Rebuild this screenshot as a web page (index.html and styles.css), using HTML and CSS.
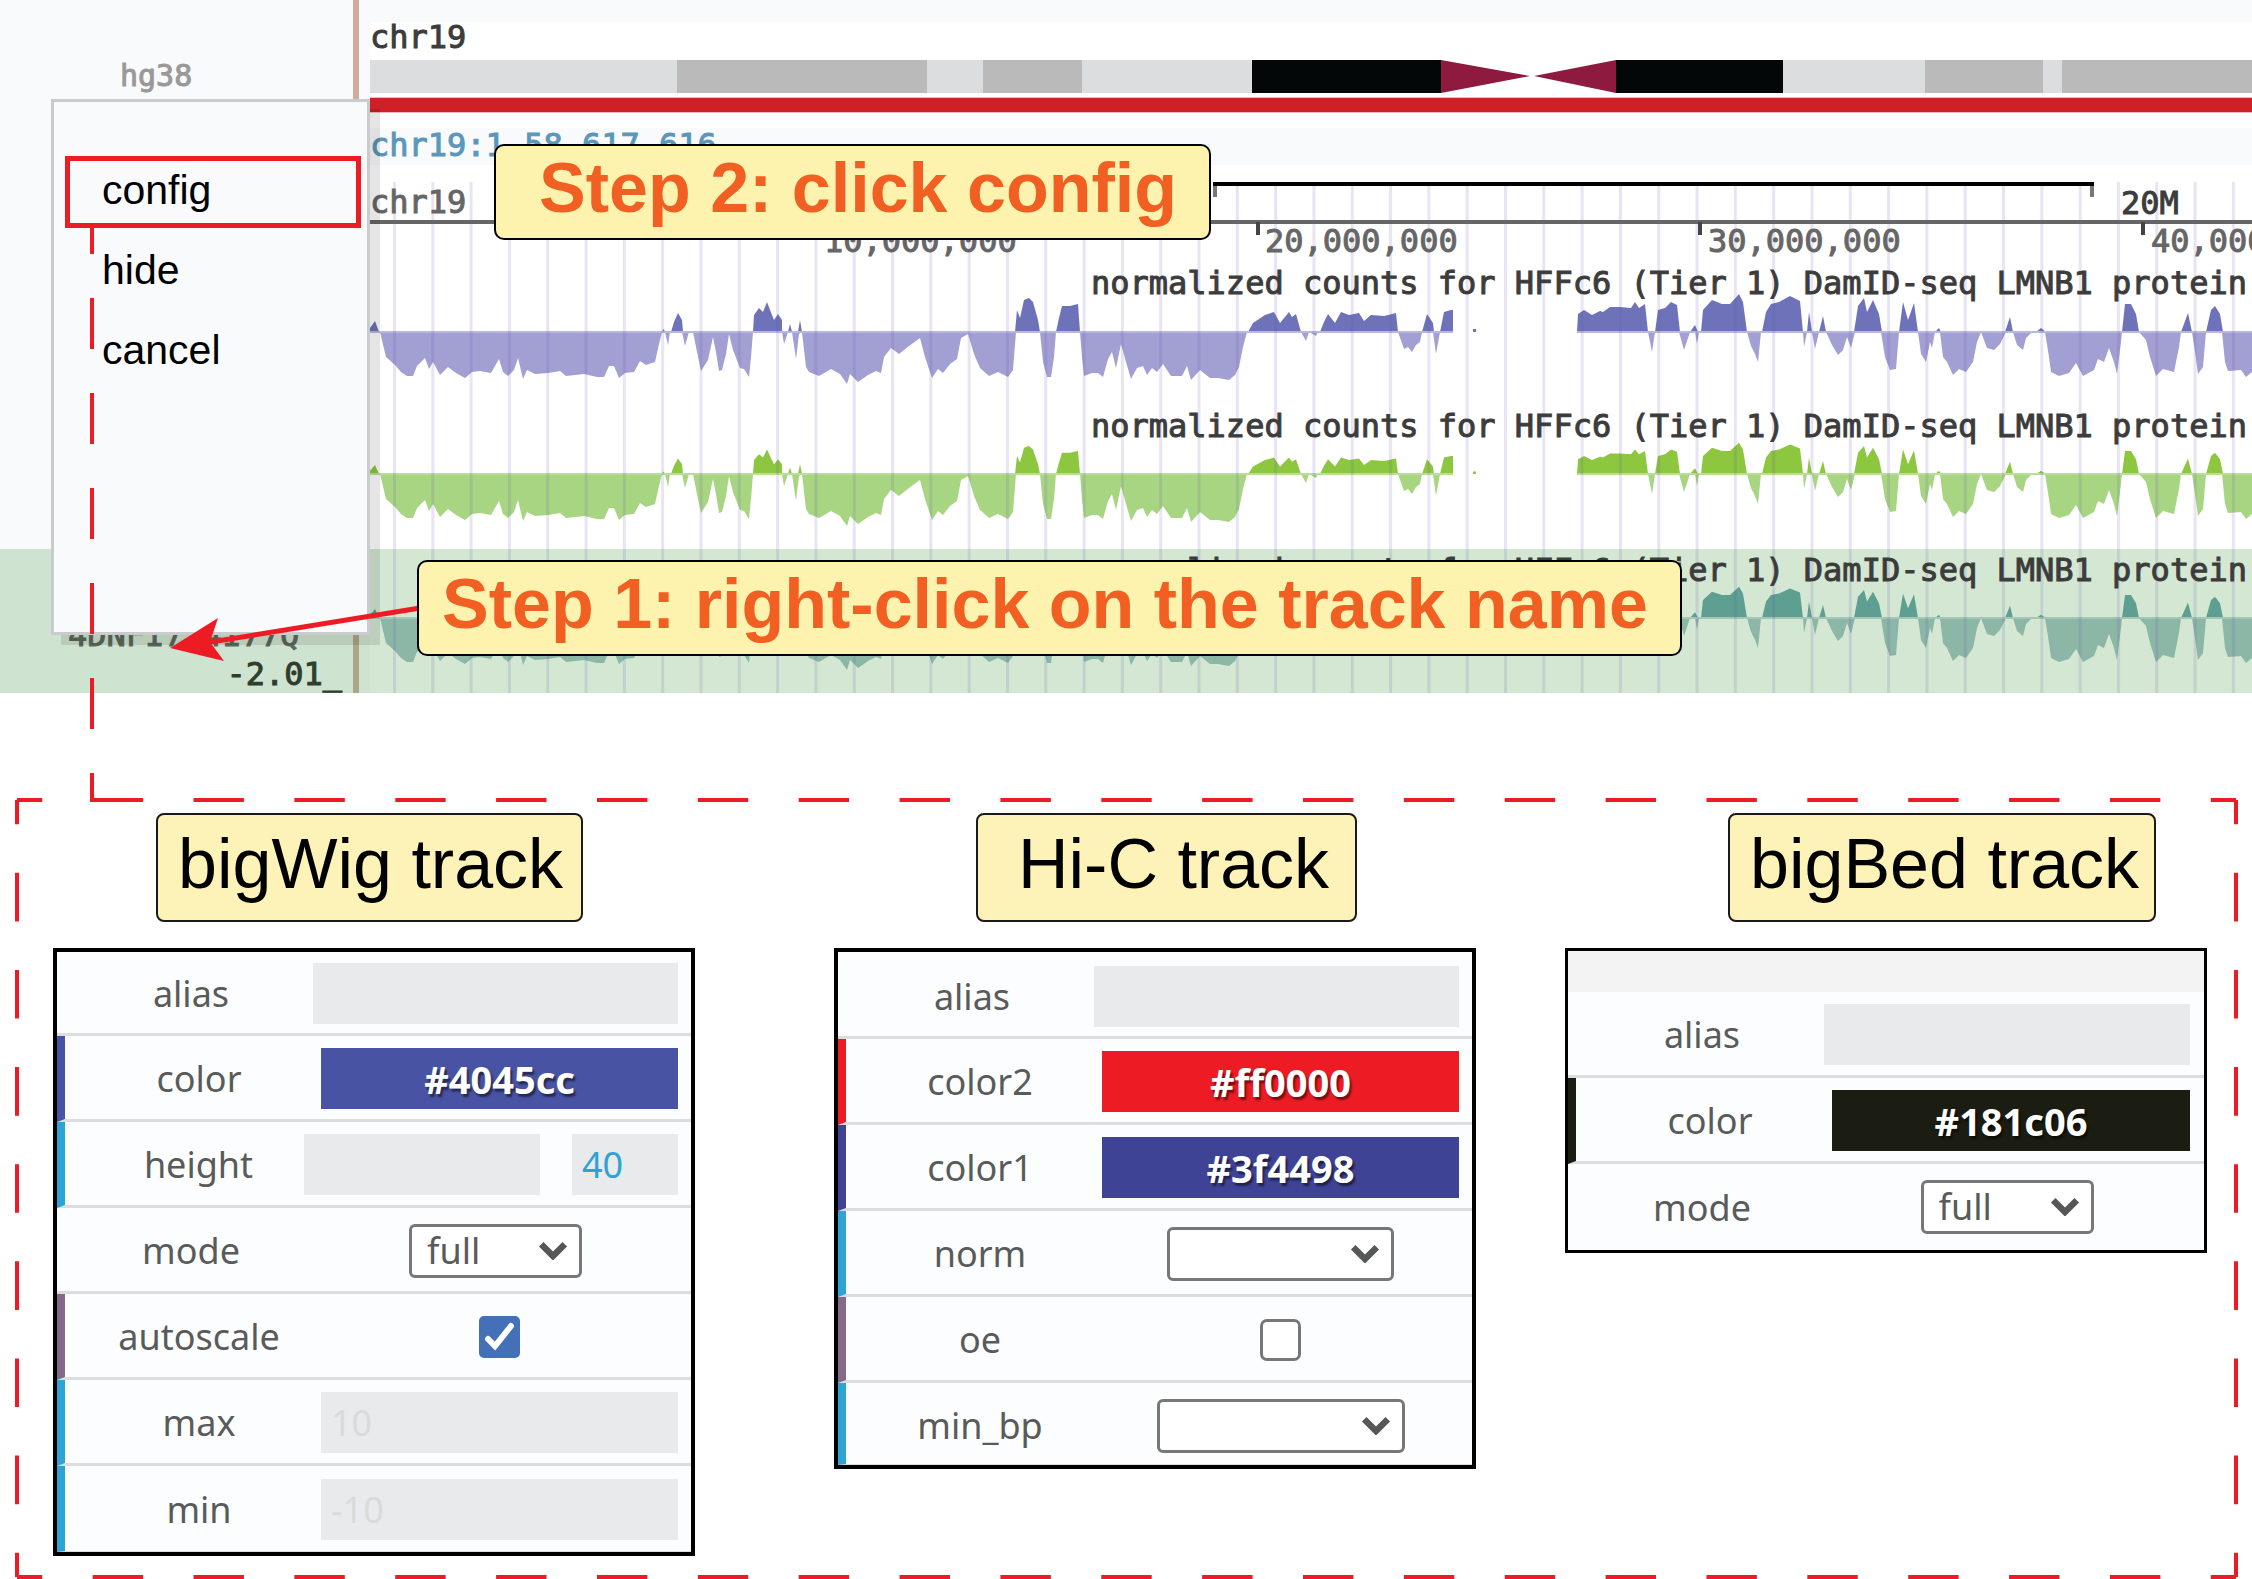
FILE: index.html
```html
<!DOCTYPE html>
<html lang="en">
<head>
<meta charset="utf-8">
<title>Track configuration</title>
<link rel="stylesheet" href="styles.css">
</head>
<body>
<main class="figure">
  <section class="browser">
    <div class="names">
      <span class="genome">hg38</span>
      <div class="selected-name">
        <span class="track-id">4DNFI7Z4I77Q</span>
        <span class="track-min">-2.01_</span>
      </div>
    </div>
    <svg class="tracks" viewBox="370 0 1882 693" role="img" aria-label="chr19 tracks">
      <defs>
        <pattern id="grid" x="393" y="0" width="38.31" height="40" patternUnits="userSpaceOnUse">
          <rect width="3" height="40" fill="#5b52b0" fill-opacity="0.15"/>
        </pattern>
        <polygon id="up" points="370,0 370,-4 375,-11 379,0 662,0 663,-3 666,0 671,0 674,-10 678,-19 682,-12 683,0 753,0 754,-17 759,-24 763,-20 767,-30 770,-22 774,-12 778,-18 782,-12 782,0 788,0 790,-8 792,0 798,0 800,-12 802,0 1015,0 1017,-22 1020,-14 1024,-32 1029,-34 1033,-30 1038,-12 1040,0 1056,0 1059,-14 1062,-26 1070,-26 1078,-28 1080,0 1248,0 1253,-9 1265,-17 1274,-20 1280,-9 1289,-20 1292,-15 1296,-18 1301,0 1320,0 1324,-10 1328,-18 1335,-9 1341,-20 1349,-17 1359,-19 1364,-11 1371,-17 1384,-16 1396,-19 1398,0 1422,0 1427,-18 1433,-9 1434,0 1440,0 1444,-20 1451,-22 1453,-22 1453,0 1473,0 1473,-3 1476,-3 1476,0 1577,0 1578,-18 1584,-22 1592,-17 1600,-21 1603,-20 1610,-25 1620,-25 1631,-24 1635,-30 1639,-24 1645,-28 1648,0 1655,0 1658,-22 1665,-24 1671,-30 1677,-27 1680,0 1690,0 1695,-7 1698,0 1701,0 1703,-22 1712,-32 1722,-28 1730,-28 1739,-38 1743,-30 1747,0 1762,0 1766,-20 1771,-28 1779,-30 1790,-36 1800,-31 1803,0 1807,0 1809,-20 1812,0 1819,0 1823,-16 1826,0 1854,0 1858,-26 1864,-34 1867,-20 1873,-32 1879,-18 1882,0 1899,0 1903,-30 1908,-12 1914,-29 1918,0 1935,0 1939,-4 1941,0 2005,0 2010,-15 2013,0 2036,0 2041,-4 2046,0 2122,0 2125,-28 2131,-28 2136,-18 2139,0 2181,0 2188,-19 2192,0 2206,0 2211,-22 2215,-26 2220,-18 2223,0"/>
        <polygon id="down" points="380,0 386,25 395,33 401,40 407,44 413,44 417,34 425,26 429,37 433,30 440,43 448,35 456,41 465,46 472,40 480,39 491,41 499,27 503,40 508,44 514,38 518,26 523,47 527,38 535,42 548,41 560,39 566,44 584,42 597,45 604,45 609,34 614,34 619,46 625,41 634,40 640,29 646,33 655,30 659,12 662,0 665,0 668,13 670,0 682,0 685,14 689,0 693,0 697,20 701,39 708,28 713,5 716,20 719,39 722,38 726,22 729,2 733,18 740,36 744,37 749,45 751,25 753,0 782,0 784,12 788,0 792,0 796,27 799,2 802,0 806,35 809,40 819,44 831,37 840,42 847,52 850,42 858,50 868,43 876,39 881,41 884,25 891,16 899,22 909,14 920,6 925,25 932,46 938,37 943,41 950,32 957,27 961,6 968,2 974,22 980,36 989,44 998,40 1008,45 1013,38 1016,0 1040,0 1043,30 1047,45 1051,45 1054,25 1056,0 1080,0 1082,25 1084,44 1092,41 1098,41 1103,45 1108,27 1112,20 1116,36 1121,12 1126,30 1131,47 1137,36 1143,34 1147,43 1152,36 1157,40 1163,32 1171,44 1182,44 1187,34 1191,48 1200,38 1210,46 1218,46 1229,48 1235,43 1239,35 1243,15 1247,0 1301,0 1306,9 1309,0 1316,4 1318,0 1398,0 1404,17 1408,15 1412,20 1416,13 1420,10 1422,0 1433,0 1436,22 1440,0 1648,0 1652,20 1655,0 1679,0 1684,18 1690,0 1695,0 1697,12 1699,0 1747,0 1751,14 1755,22 1758,30 1761,0 1803,0 1804,15 1807,0 1812,0 1815,17 1819,0 1826,0 1832,13 1838,23 1843,18 1847,5 1851,16 1855,0 1881,0 1885,25 1890,38 1896,37 1899,0 1918,0 1921,22 1926,30 1930,10 1932,16 1935,0 1940,0 1943,25 1947,30 1953,43 1959,37 1966,40 1973,30 1977,10 1981,0 1987,16 1994,18 2000,12 2006,0 2013,0 2017,13 2023,18 2026,6 2032,0 2045,0 2049,25 2051,40 2059,44 2069,41 2076,31 2083,44 2094,38 2098,27 2104,30 2109,16 2114,30 2117,42 2121,10 2122,0 2139,0 2146,8 2150,25 2156,44 2163,37 2174,40 2179,15 2181,0 2192,0 2195,20 2198,42 2203,35 2206,0 2222,0 2225,30 2228,39 2241,38 2246,45 2252,40 2252,0"/>
        <path id="zero" d="M370 0H1453M1577 0H2252"/>
      </defs>

      <rect class="band" x="370" y="0" width="1882" height="22"/>
      <rect class="band" x="370" y="128" width="1882" height="37"/>

      <!-- ideogram -->
      <g>
        <rect x="370" y="60" width="882" height="33" fill="#dcdddf"/>
        <rect x="1783" y="60" width="469" height="33" fill="#dcdddf"/>
        <g fill="#bababa">
          <rect x="677" y="60" width="250" height="33"/>
          <rect x="983" y="60" width="99" height="33"/>
          <rect x="1925" y="60" width="118" height="33"/>
          <rect x="2062" y="60" width="190" height="33"/>
        </g>
        <rect x="1252" y="60" width="189" height="33" fill="#030707"/>
        <rect x="1616" y="60" width="167" height="33" fill="#030707"/>
        <path d="M1441 60L1530 76L1441 93ZM1616 60L1534 76L1616 93Z" fill="#8e1a40"/>
        <rect x="370" y="97" width="1882" height="16" fill="#f3b9bb"/>
        <rect x="370" y="98" width="1882" height="14" fill="#cd2027"/>
      </g>

      <!-- highlighted track -->
      <rect x="370" y="549" width="1882" height="144" fill="#d3e7d2"/>

      <!-- signal tracks -->
      <g transform="translate(0 332)">
        <use href="#down" fill="#a29fd2"/><use href="#up" fill="#6e72b8"/>
        <use href="#zero" stroke="#b9b7dd" stroke-width="2"/>
      </g>
      <g transform="translate(0 474)">
        <use href="#down" fill="#a8d582"/><use href="#up" fill="#8dc63f" transform="scale(1 0.82)"/>
        <use href="#zero" stroke="#b9dd9a" stroke-width="2"/>
      </g>
      <g transform="translate(0 618)">
        <use href="#down" fill="#8cb6a6"/><use href="#up" fill="#5e9f92" transform="scale(1 0.82)"/>
        <use href="#zero" stroke="#a3c6b7" stroke-width="2"/>
      </g>
      <rect x="380" y="182" width="1872" height="511" fill="url(#grid)"/>

      <!-- ruler -->
      <path d="M370 222H2252" stroke="#666" stroke-width="4"/>
      <path d="M1215 184V197M2092 184V197" stroke="#777" stroke-width="4"/>
      <path d="M1213 184H2094" stroke="#000" stroke-width="4"/>
      <path d="M1258 222V235M1700 222V235M2143 222V235" stroke="#444" stroke-width="4"/>

      <g class="mono">
        <g class="ink-dark">
          <text x="370" y="48">chr19</text>
          <text x="2121" y="214">20M</text>
          <text x="1091" y="294">normalized counts for HFFc6 (Tier 1) DamID-seq LMNB1 protein</text>
          <text x="1091" y="437">normalized counts for HFFc6 (Tier 1) DamID-seq LMNB1 protein</text>
          <text x="1091" y="581">normalized counts for HFFc6 (Tier 1) DamID-seq LMNB1 protein</text>
        </g>
        <g class="ink-blue">
          <text x="370" y="156">chr19:1-58,617,616</text>
        </g>
        <g class="ink-grey">
          <text x="370" y="213">chr19</text>
          <text x="824" y="252">10,000,000</text>
          <text x="1265" y="252">20,000,000</text>
          <text x="1708" y="252">30,000,000</text>
          <text x="2151" y="252">40,000,000</text>
        </g>
      </g>
    </svg>
  </section>

  <nav class="menu" aria-label="Track menu">
    <button class="menu-item menu-item--active" type="button">config</button>
    <button class="menu-item" type="button">hide</button>
    <button class="menu-item" type="button">cancel</button>
  </nav>

  <svg class="links" width="430" height="802" aria-hidden="true">
    <path d="M92 228V802" stroke="#ed1c24" stroke-width="4" stroke-dasharray="51 44" stroke-dashoffset="25"/>
    <path d="M420 608L205 643" stroke="#ed1c24" stroke-width="5"/>
    <path d="M170 648L218 618L210 642L224 661Z" fill="#ed1c24"/>
  </svg>
  <p class="callout callout--step2">Step 2: click config</p>
  <p class="callout callout--step1">Step 1: right-click on the track name</p>

  <section class="configs">
    <svg class="frame" aria-hidden="true">
      <g stroke="#ed1c24" stroke-width="4" stroke-dasharray="1 1" stroke-dashoffset="0.5">
        <line x1="0" y1="0" x2="100%" y2="0" pathLength="44"/>
        <line x1="0" y1="100%" x2="100%" y2="100%" pathLength="44"/>
        <line x1="0" y1="0" x2="0" y2="100%" pathLength="16"/>
        <line x1="100%" y1="0" x2="100%" y2="100%" pathLength="16"/>
      </g>
    </svg>

    <article class="config config--bigwig">
      <h2 class="title">bigWig track</h2>
      <form class="panel">
        <div class="row row--plain">
          <label for="w-alias">alias</label>
          <div class="value"><input class="field" id="w-alias" type="text"></div>
        </div>
        <div class="row row--indigo">
          <label for="w-color">color</label>
          <div class="value"><input class="field swatch swatch--indigo" id="w-color" type="text" value="#4045cc"></div>
        </div>
        <div class="row row--blue row--slider">
          <label for="w-height">height</label>
          <div class="value">
            <input class="field slider" id="w-height" type="range" min="10" max="100" value="40">
            <input class="field amount" type="text" value="40" aria-label="height in pixels">
          </div>
        </div>
        <div class="row row--plain">
          <label for="w-mode">mode</label>
          <div class="value"><span class="picker"><select id="w-mode"><option>full</option></select><svg viewBox="0 0 28 19"><path d="M3 4L14 15L25 4"/></svg></span></div>
        </div>
        <div class="row row--plum">
          <label for="w-auto">autoscale</label>
          <div class="value"><span class="tick"><input id="w-auto" type="checkbox" checked><svg viewBox="0 0 41 41"><path d="M9 23L16 30L32 10"/></svg></span></div>
        </div>
        <div class="row row--blue">
          <label for="w-max">max</label>
          <div class="value"><input class="field" id="w-max" type="text" placeholder="10"></div>
        </div>
        <div class="row row--blue">
          <label for="w-min">min</label>
          <div class="value"><input class="field" id="w-min" type="text" placeholder="-10"></div>
        </div>
      </form>
    </article>

    <article class="config config--hic">
      <h2 class="title">Hi-C track</h2>
      <form class="panel">
        <div class="row row--plain">
          <label for="h-alias">alias</label>
          <div class="value"><input class="field" id="h-alias" type="text"></div>
        </div>
        <div class="row row--red">
          <label for="h-color2">color2</label>
          <div class="value"><input class="field swatch swatch--red" id="h-color2" type="text" value="#ff0000"></div>
        </div>
        <div class="row row--navy">
          <label for="h-color1">color1</label>
          <div class="value"><input class="field swatch swatch--navy" id="h-color1" type="text" value="#3f4498"></div>
        </div>
        <div class="row row--blue">
          <label for="h-norm">norm</label>
          <div class="value"><span class="picker picker--norm"><select id="h-norm"><option></option></select><svg viewBox="0 0 28 19"><path d="M3 4L14 15L25 4"/></svg></span></div>
        </div>
        <div class="row row--plum">
          <label for="h-oe">oe</label>
          <div class="value"><span class="tick"><input id="h-oe" type="checkbox"></span></div>
        </div>
        <div class="row row--blue">
          <label for="h-bp">min_bp</label>
          <div class="value"><span class="picker picker--bp"><select id="h-bp"><option></option></select><svg viewBox="0 0 28 19"><path d="M3 4L14 15L25 4"/></svg></span></div>
        </div>
      </form>
    </article>

    <article class="config config--bigbed">
      <h2 class="title">bigBed track</h2>
      <form class="panel">
        <div class="strip"></div>
        <div class="row row--plain">
          <label for="b-alias">alias</label>
          <div class="value"><input class="field" id="b-alias" type="text"></div>
        </div>
        <div class="row row--black">
          <label for="b-color">color</label>
          <div class="value"><input class="field swatch swatch--black" id="b-color" type="text" value="#181c06"></div>
        </div>
        <div class="row row--plain">
          <label for="b-mode">mode</label>
          <div class="value"><span class="picker"><select id="b-mode"><option>full</option></select><svg viewBox="0 0 28 19"><path d="M3 4L14 15L25 4"/></svg></span></div>
        </div>
      </form>
    </article>
  </section>
</main>
</body>
</html>
```
FILE: styles.css
```css
* {
  box-sizing: border-box;
}

body {
  margin: 0;
  background: #fff;
  color: #000;
  font-family: "Liberation Sans", Arial, sans-serif;
}

.figure {
  position: relative;
  padding-bottom: 2px;
}

/* Genome browser */

.browser {
  display: flex;
}

.names {
  display: flex;
  flex: none;
  flex-direction: column;
  justify-content: space-between;
  width: 370px;
  background: linear-gradient(#d0aca0, #d0aca0) 353px 0 / 6px 100% no-repeat #f9fafc;
  font-family: "DejaVu Sans Mono", monospace;
  font-size: 32px;
  line-height: 40px;
  -webkit-text-stroke: 1px;
}

.genome {
  padding: 56px 0 0 120px;
  color: #999;
  font-size: 30px;
}

.selected-name {
  display: flex;
  flex-direction: column;
  height: 144px;
  padding-top: 76px;
  background: rgba(34, 139, 34, 0.2);
}

.track-id {
  padding-left: 68px;
  color: #5c685c;
  line-height: 20px;
}

.track-min {
  padding: 10px 28px 0 0;
  color: #2f3d2f;
  line-height: 38px;
  text-align: right;
}

.tracks {
  display: block;
  flex: 1;
  min-width: 0;
  height: auto;
}

.band {
  fill: #f9fafc;
}

.mono {
  font-family: "DejaVu Sans Mono", monospace;
  font-size: 32px;
  stroke-width: 1px;
}

.ink-dark {
  fill: #3c3c3c;
  stroke: #3c3c3c;
}

.ink-blue {
  fill: #5a97ba;
  stroke: #5a97ba;
}

.ink-grey {
  fill: #666;
  stroke: #666;
}

/* Context menu and annotations over the browser */

.menu {
  position: absolute;
  top: 99px;
  left: 51px;
  display: flex;
  flex-direction: column;
  gap: 8px;
  width: 319px;
  height: 536px;
  padding: 54px 6px 0 11px;
  border: 3px solid #c9cccc;
  background: #f9fafc;
  box-shadow: 10px 10px 0 rgba(0, 0, 0, 0.1);
}

.menu-item {
  height: 72px;
  padding: 0 0 4px 32px;
  border: 5px solid transparent;
  background: none;
  color: #000;
  font-family: inherit;
  font-size: 41px;
  text-align: left;
}

.menu-item--active {
  border-color: #ed1c24;
}

.links {
  position: absolute;
  top: 0;
  left: 0;
  fill: none;
  pointer-events: none;
}

.callout {
  position: absolute;
  height: 96px;
  margin: 0;
  border: 2px solid #000;
  border-radius: 10px;
  background: #fef3ae;
  color: #f15f22;
  font-size: 70px;
  font-weight: bold;
  line-height: 84px;
  white-space: nowrap;
}

.callout--step2 {
  top: 144px;
  left: 494px;
  padding: 0 32px 0 43px;
}

.callout--step1 {
  top: 560px;
  left: 417px;
  padding: 0 32px 0 23px;
}

/* Track settings */

.configs {
  position: relative;
  display: flex;
  align-items: flex-start;
  margin: 107px 16px 0 17px;
  padding: 13px 29px 21px 36px;
}

.frame {
  position: absolute;
  top: 0;
  left: 0;
  width: 100%;
  height: 100%;
  overflow: visible;
  pointer-events: none;
}

.config {
  flex: 1;
  min-width: 0;
}

.config--hic {
  margin-left: 139px;
}

.config--bigbed {
  margin-left: 89px;
}

.title {
  width: max-content;
  height: 109px;
  margin: 0 0 26px 103px;
  padding: 0 18px 0 20px;
  border: 2px solid #1a1a1a;
  border-radius: 8px;
  background: #fdf3b8;
  font-size: 70px;
  font-weight: normal;
  line-height: 98px;
}

.config--hic .title {
  margin-left: 142px;
  padding: 0 26px 0 40px;
}

.config--bigbed .title {
  margin-left: 163px;
  padding: 0 15px 0 20px;
}

.panel {
  border: 4px solid #000;
  background: #fcfdff;
  color: #595b5a;
  font-family: "Noto Sans", sans-serif;
  font-size: 36px;
}

.config--bigbed .panel {
  border-width: 3px;
}

.strip {
  height: 41px;
  background: #f3f3f3;
}

.row {
  display: flex;
  align-items: center;
  height: 86px;
  padding: 2px 13px 0 0;
  border-bottom: 3px solid #dcddde;
  border-left: 8px solid;
}

.config--bigwig .row:first-child {
  height: 84px;
}

.config--hic .row:first-child {
  height: 87px;
  padding-top: 4px;
}

.row:last-child {
  border-bottom-width: 1px;
}

.config--hic .row:last-child {
  height: 82px;
  padding-top: 4px;
}

.config--bigbed .row {
  padding-right: 14px;
}

.config--bigbed .row:last-child {
  padding-top: 0;
  border-bottom: 0;
}

.row--plain {
  border-left: 0;
}

.row--indigo {
  border-left-color: #4853a4;
}

.row--blue {
  border-left-color: #2ea3d6;
}

.row--plum {
  border-left-color: #836a8b;
}

.row--red {
  border-left-color: #ed1c24;
}

.row--navy {
  border-left-color: #3f4396;
}

.row--black {
  border-left-color: #1b1d12;
}

.row label {
  flex: none;
  width: 256px;
  padding-left: 12px;
  text-align: center;
}

.row--slider label {
  width: 239px;
  padding-left: 28px;
}

.value {
  display: flex;
  flex: 1;
  justify-content: center;
  gap: 32px;
  min-width: 0;
}

.field {
  flex: 1;
  min-width: 0;
  height: 61px;
  margin: 0;
  padding: 0 10px;
  border: 0;
  border-radius: 0;
  background: #e9eaeb;
  color: #595b5a;
  font: inherit;
}

.field::placeholder {
  color: #d9dbda;
  opacity: 1;
}

.swatch {
  color: #fff;
  font-size: 38px;
  font-weight: bold;
  text-align: center;
  text-shadow: 2px 3px 2px rgba(0, 0, 0, 0.5);
}

.swatch--indigo {
  background: #4853a4;
}

.swatch--red {
  background: #ed1c24;
}

.swatch--navy {
  background: #3f4396;
}

.swatch--black {
  background: #1b1d12;
}

.slider {
  appearance: none;
}

.slider::-webkit-slider-thumb {
  appearance: none;
  width: 1px;
  height: 1px;
  background: transparent;
}

.amount {
  flex: none;
  width: 106px;
  color: #2ea3d6;
}

.picker {
  position: relative;
  width: 173px;
  height: 54px;
}

.picker--norm {
  width: 227px;
}

.picker--bp {
  width: 248px;
}

.picker select {
  appearance: none;
  width: 100%;
  height: 100%;
  padding: 0 0 0 15px;
  border: 3px solid #777;
  border-radius: 6px;
  background: #fff;
  color: inherit;
  font: inherit;
  line-height: 48px;
}

.picker svg {
  position: absolute;
  top: 16px;
  right: 14px;
  width: 30px;
  fill: none;
  stroke: #555857;
  stroke-width: 6;
  pointer-events: none;
}

.tick {
  position: relative;
  width: 41px;
  height: 42px;
}

.tick input {
  appearance: none;
  display: block;
  width: 100%;
  height: 100%;
  margin: 0;
  border: 3px solid #777;
  border-radius: 7px;
  background: #fff;
}

.tick input:checked {
  border-color: #4470b8;
  border-radius: 5px;
  background: #4470b8;
}

.tick svg {
  position: absolute;
  top: 0;
  left: 0;
  width: 41px;
  fill: none;
  stroke: #fff;
  stroke-width: 6;
  stroke-linecap: round;
  pointer-events: none;
}
```
